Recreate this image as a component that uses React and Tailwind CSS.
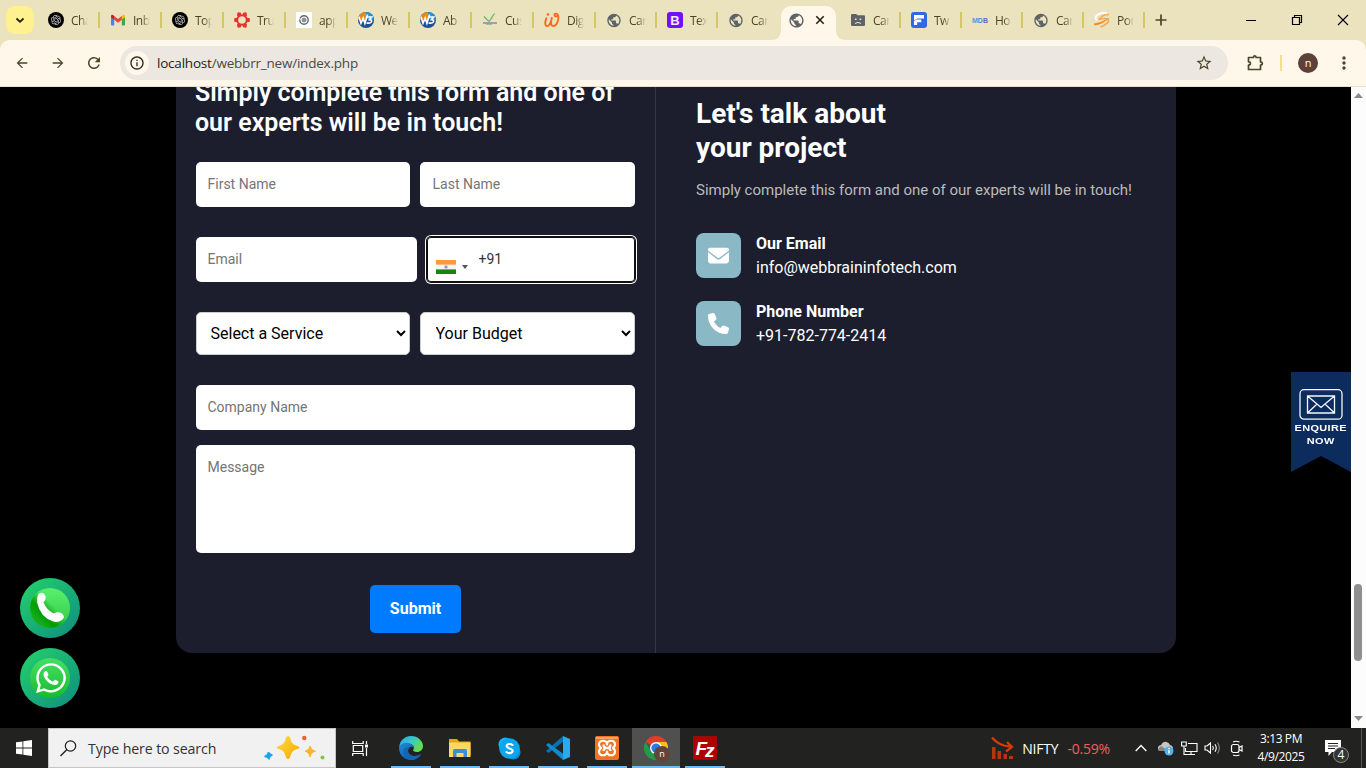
import React from "react";
import { MdPublic, MdStarBorder, MdMoreVert, MdArrowBack, MdArrowForward, MdRefresh, MdInfoOutline } from "react-icons/md";
import { FaEnvelope, FaPhone, FaWhatsapp } from "react-icons/fa6";
import { RiOpenaiFill } from "react-icons/ri";

function OpenAi() {
  return (
    <div className="flex size-4 items-center justify-center rounded-full bg-black text-[#d0d0d0]">
      <RiOpenaiFill size={12} />
    </div>
  );
}

function Gmail() {
  return (
    <svg width="16" height="16" viewBox="0 0 16 16">
      <path d="M1 4v8.6q0 .9 1 .9h2.2V7z" fill="#4285f4" />
      <path d="M15 4v8.6q0 .9-1 .9h-2.2V7z" fill="#34a853" />
      <path d="M11.8 4.2 13 3q2-1 2 1.2v1l-3.2 2.5z" fill="#fbbc04" />
      <path d="M4.2 4 8 7l3.8-3v3.7L8 10.7 4.2 7.7z" fill="#ea4335" />
      <path d="M1 5.2V4.1Q1.2 2.2 3 3l1.2 1v3.7z" fill="#c5221f" />
    </svg>
  );
}

function RedRing() {
  return (
    <svg width="16" height="16" viewBox="0 0 16 16">
      <g fill="#e5322f">
        <circle cx="8" cy="8" r="4.8" fill="none" stroke="#e5322f" strokeWidth="2" />
        <rect x="3.2" y="0.5" width="3.800" height="3.800" rx=".9" transform="rotate(12 5 2.400)" />
        <rect x="9" y="0.5" width="3.800" height="3.800" rx=".9" transform="rotate(-12 11 2.400)" />
        <rect x="12" y="6.100" width="3.800" height="3.800" rx=".9" />
        <rect x="9" y="11.7" width="3.800" height="3.800" rx=".9" transform="rotate(12 11 13.500)" />
        <rect x="3.2" y="11.7" width="3.800" height="3.800" rx=".9" transform="rotate(-12 5 13.500)" />
        <rect x="0.2" y="6.100" width="3.800" height="3.800" rx=".9" />
      </g>
    </svg>
  );
}

function GreyRing() {
  return (
    <svg width="16" height="16" viewBox="0 0 16 16">
      <path d="M0 0h16v16H0z" fill="#fff" />
      <circle cx="8" cy="8" r="4.200" fill="none" stroke="#5f666b" strokeWidth="1.400" />
      <circle cx="8" cy="8" r="2" fill="#8d9396" stroke="#7a8084" strokeWidth=".8" />
      <path d="M3 6.500 5 7.500" stroke="#fff" strokeWidth="1" />
    </svg>
  );
}

function WebBrain() {
  return (
    <svg width="16" height="16" viewBox="0 0 16 16">
      <circle cx="8" cy="8" r="8" fill="#1c4f95" />
      <path d="M0 8a8 8 0 0 1 8-8v7z" fill="#e58a17" />
      <path d="M8 0a8 8 0 0 1 8 8L8 7z" fill="#2593c8" />
      <path d="m1 4.8 2 6.4 2.2-5 1.7 5L9.6 2.6M9.4 5h4.2l-2.2 2.7q3 .2 2 2.2-1.2 1.8-4.8 1" fill="none" stroke="#fff" strokeWidth="1.7" />
    </svg>
  );
}

function GreenLeaf() {
  return (
    <svg width="16" height="16" viewBox="0 0 16 16">
      <path d="m2 4.500 5 5 5.500-8" fill="none" stroke="#56b773" strokeWidth="1.200" />
      <path d="m4.500 6.500 2.700 3L11 5" fill="none" stroke="#8bc79a" strokeWidth=".8" />
      <path d="M1 11h14" stroke="#8a75a8" strokeWidth="1.3" />
      <path d="M4 12.200h6" stroke="#58a879" strokeWidth=".8" />
    </svg>
  );
}

function OrangeW() {
  return (
    <svg width="17" height="16" viewBox="0 0 17 16">
      <path d="M2.500 6C.8 10 .8 14.500 3.300 14.500 6 14.500 7.500 9.500 8.500 5 7.300 9.500 6.800 14.500 9.800 14.500c3.700 0 6-6.500 5.500-10.500-.6-3.500-4-3.500-4.200-1.300 0 1.500 1.400 1.800 2.400 1.300" fill="none" stroke="#fb6a1d" strokeWidth="2" strokeLinecap="round" />
      <circle cx="4.300" cy="2.200" r="1.400" fill="#fb6a1d" />
    </svg>
  );
}

const Globe = () => <MdPublic size={17} className="text-[#5f6368]" />;

function Bootstrap() {
  return <div className="flex size-4 items-center justify-center rounded-[3px] bg-[#7311f5] font-['Liberation_Sans',sans-serif] text-[13px] leading-none font-bold text-[#f3eaff]">B</div>;
}

function SadFolder() {
  return (
    <svg width="16" height="16" viewBox="0 0 16 16">
      <path d="M1 3q0-1 1-1h4l1.700 1.300H14q1 0 1 1V13q0 1-1 1H2q-1 0-1-1z" fill="#5f6368" />
      <path d="M5 6.500h1.600v1.500H5zM9.600 6.500h1.600v1.500H9.600z" fill="#ece5c6" />
      <path d="M5.500 12v-.8q2.500-1.500 5 0v.8" fill="none" stroke="#ece5c6" />
    </svg>
  );
}

function BlueF() {
  return (
    <svg width="16" height="16" viewBox="0 0 16 16">
      <rect width="16" height="16" rx="3" fill="#3267e8" />
      <path d="M3 3h10v3.400H6.300L3 8.500zM3 9.300 5.500 7.500h4.800v2.800H6.200V13H3z" fill="#fff" />
    </svg>
  );
}

function Mdb() {
  return (
    <div className="flex w-4 justify-center font-['Liberation_Sans',sans-serif] text-[7px] leading-none font-bold">
      <span className="text-[#35a9df]">M</span><span className="text-[#3d8fd9]">D</span><span className="text-[#7a5cc4]">B</span>
    </div>
  );
}

function OrangeS() {
  return (
    <svg width="16" height="16" viewBox="0 0 16 16">
      <path d="M13 1C7 0 1.500 2.500 1.500 6.300q0 2.200 4 1.700" fill="none" stroke="#fff" strokeWidth="1.800" />
      <path d="M15 2.500Q8 2.500 5 7.500q8.500-2 9.500.5c.8 2-3 5.500-8 7" fill="none" stroke="#f6a957" strokeWidth="1.600" />
      <path d="M0 11.500Q8 10.500 16 5q-6 7-15.500 8.500z" fill="#f38a1c" />
    </svg>
  );
}

const tabs = [
  { icon: OpenAi, text: "Cha", wide: true },
  { icon: Gmail, text: "Inb", wide: true },
  { icon: OpenAi, text: "Top", wide: true },
  { icon: RedRing, text: "Tru", wide: true },
  { icon: GreyRing, text: "app", wide: true },
  { icon: WebBrain, text: "We", wide: true },
  { icon: WebBrain, text: "Ab", wide: true },
  { icon: GreenLeaf, text: "Cus", wide: true },
  { icon: OrangeW, text: "Dig", wide: true },
  { icon: Globe, text: "Car" },
  { icon: Bootstrap, text: "Tex" },
  { icon: Globe, text: "Car", noSep: true },
  { active: true },
  { icon: SadFolder, text: "Car" },
  { icon: BlueF, text: "Tw" },
  { icon: Mdb, text: "Ho" },
  { icon: Globe, text: "Car" },
  { icon: OrangeS, text: "Por" },
];

function Tab({ icon: Icon, text, wide, noSep, active }) {
  if (active) {
    return (
      <div className="relative flex h-[34px] w-[61px] shrink-0 self-end px-[2px]">
        <div className="flex w-[55px] items-center rounded-t-[10px] bg-[#fff8ea] pb-[6px] pl-[7px]">
          <Globe />
          <svg className="ml-[10px]" width="10" height="10" viewBox="0 0 10 10"><path d="m1.300 1.300 7.400 7.400m0-7.400L1.300 8.700" stroke="#25230f" strokeWidth="1.600" /></svg>
        </div>
        <svg className="absolute bottom-0 -left-[8px]" width="10" height="10"><path d="M10 0v10H0Q10 10 10 0" fill="#fff8ea" /></svg>
        <svg className="absolute bottom-0 left-[57px]" width="10" height="10"><path d="M0 0v10h10Q0 10 0 0" fill="#fff8ea" /></svg>
      </div>
    );
  }
  return (
    <div className={wide ? "flex h-full w-[62px] shrink-0 items-center pl-[10px]" : "flex h-full w-[61px] shrink-0 items-center pl-[10px]"}>
      <div className="flex w-4 shrink-0 justify-center"><Icon /></div>
      <div className="mt-px ml-[7px] w-[17px] overflow-hidden text-[12px] leading-4 tracking-[-0.500px] whitespace-nowrap text-[#4a4629] [mask-image:linear-gradient(to_right,black_50%,transparent)]">{text}</div>
      {!noSep && <div className="ml-auto h-4 w-[2px] bg-[#d6c765]" />}
    </div>
  );
}

function Browser() {
  return (
    <header className="shrink-0 bg-[#ebe2be] font-['Open_Sans','Noto_Sans',sans-serif]">
      <div className="flex h-10 items-center">
        <div className="ml-[6px] flex size-7 shrink-0 items-center justify-center rounded-[9px] bg-[#fff18f]">
          <svg width="10" height="7" viewBox="0 0 10 7"><path d="m1.500 1.500 3.500 3.300 3.500-3.300" fill="none" stroke="#1e1c10" strokeWidth="1.800" /></svg>
        </div>
        <div className="w-1 shrink-0" />
        {tabs.map((t, i) => <Tab key={i} {...t} />)}
        <svg className="ml-[10px]" width="12" height="12" viewBox="0 0 12 12"><path d="M6 .5v11M.5 6h11" stroke="#4a4629" strokeWidth="1.700" /></svg>
        <div className="ml-auto flex items-center pr-[17px]">
          <svg width="12" height="12"><path d="M1 6.500h10" stroke="#000" /></svg>
          <svg className="ml-[34px]" width="12" height="12" viewBox="0 0 12 12"><path d="M1.500 3.500h7v7h-7zM3.500 3V1.500h7v7H9" fill="none" stroke="#000" strokeWidth="1.200" /></svg>
          <svg className="ml-[34px]" width="12" height="12"><path d="m1 1 10 10M11 1 1 11" stroke="#000" strokeWidth="1.100" /></svg>
        </div>
      </div>
      <div className="flex h-[47px] items-center rounded-t-[10px] border-b border-[#e6deca] bg-[#fff8ea] text-[#4a4629]">
        <MdArrowBack className="ml-[14px]" size={16} />
        <MdArrowForward className="ml-5" size={16} />
        <MdRefresh className="ml-[19px]" size={18} />
        <div className="ml-[17px] flex h-[34px] w-[1108px] items-center rounded-full bg-[#ece7e0] pr-[15px]">
          <div className="ml-[5px] flex size-6 items-center justify-center rounded-full bg-[#fff8ea] text-[#2a291f]"><MdInfoOutline size={16} /></div>
          <div className="mt-px ml-2 text-[13.500px] tracking-[-0.210px] text-[#4c4a44]"><span className="text-[#1f1e1a]">localhost</span>/webbrr_new/index.php</div>
          <MdStarBorder className="ml-auto" size={18} />
        </div>
        <svg className="ml-[19px]" width="18" height="18" viewBox="0 0 18 18"><path d="M1.500 3.500h5q0-1.700 1.300-1.700T9.100 3.500h4.400V8q1.800 0 1.800 1.500T13.500 11v4.500h-12V11q1.900 0 1.900-1.600T1.500 7.800z" fill="none" stroke="#4a4629" strokeWidth="1.700" strokeLinejoin="round" /></svg>
        <div className="ml-[15px] h-4 w-[2px] bg-[#f3e37c]" />
        <div className="ml-4 flex size-5 items-center justify-center rounded-full bg-[#5d4037] pb-px text-[11px] leading-none text-white">n</div>
        <MdMoreVert className="ml-[16px]" size={20} />
      </div>
    </header>
  );
}

const field = "h-[45px] rounded-[5px] bg-white pb-[2px] text-[14px] text-[#333] placeholder:text-[#757575]";
const select = "h-[43px] rounded-[5px] border border-[#ccc] bg-white text-[16px] text-black";

function ContactForm() {
  return (
    <form className="flex w-[480px] flex-col border-r border-[#34374a] px-5">
      <h2 className="-mt-[9px] -ml-px text-[24.960px] leading-[30px] font-semibold whitespace-nowrap text-white">Simply complete this form and one of<br />our experts will be in touch!</h2>
      <div className="mt-6 flex gap-[10px]">
        <input className={field + " w-[214px] px-[11.500px]"} placeholder="First Name" />
        <input className={field + " w-[215px] px-[12.500px]"} placeholder="Last Name" />
      </div>
      <div className="mt-[30px] flex gap-[10px]">
        <input className={field + " w-[221px] px-[11.500px]"} placeholder="Email" />
        <div className="flex h-[45px] w-[208px] items-center rounded-[4px] bg-white pl-[9px] shadow-[0_0_0_1px_#101010,0_0_0_2px_#fff] ring-1 ring-[#101010] ring-inset">
          <svg className="mt-[15px]" width="20" height="14" viewBox="0 0 20 14">
            <path d="M0 0h20v14H0z" fill="#f4f4f4" />
            <path d="M0 0h20v4.600H0z" fill="#ff9933" />
            <path d="M0 9.400h20V14H0z" fill="#138808" />
            <circle cx="10" cy="7" r="1.700" fill="#9898d5" />
          </svg>
          <svg className="mt-[15px] ml-[6px]" width="6" height="4"><path d="M0 0h6L3 4z" fill="#555" /></svg>
          <input className="ml-[10.500px] w-[120px] text-[14px] text-[#333]" defaultValue="+91" />
        </div>
      </div>
      <div className="mt-[30px] flex gap-[10px]">
        <select className={select + " w-[214px] px-[9.500px]"}><option>Select a Service</option></select>
        <select className={select + " w-[215px] pr-[9.500px] pl-[10.500px]"}><option>Your Budget</option></select>
      </div>
      <input className={field + " mt-[30px] px-[11.500px]"} placeholder="Company Name" />
      <textarea className="mt-[15px] h-[108px] resize-none rounded-[5px] bg-white px-[11.500px] py-3 text-[14px] leading-5 placeholder:text-[#757575]" placeholder="Message" />
      <button type="button" className="mt-8 h-12 w-[91px] self-center rounded-[5px] bg-[#007bff] text-[16px] font-bold text-white">Submit</button>
    </form>
  );
}

function ContactRow({ icon, title, value }) {
  return (
    <div className="flex gap-[15px]">
      <div className="flex h-[45px] w-[45px] items-center justify-center rounded-[8px] bg-[#8bb8c5] text-white">{icon}</div>
      <div className="-mt-px text-[16px] leading-6 text-white"><div className="font-bold">{title}</div><div>{value}</div></div>
    </div>
  );
}

function EnquireBadge() {
  return (
    <div className="absolute top-[285px] right-0 flex h-[100px] w-[60px] flex-col items-center bg-[#0d2c5e] pt-[17px] text-center font-['Liberation_Sans',sans-serif] text-[9.500px] leading-[13px] font-bold text-white [clip-path:polygon(0_0,100%_0,100%_100%,50%_84%,0_100%)]">
      <svg width="44" height="31" viewBox="0 0 44 31" fill="none" stroke="#f4f7fb">
        <rect x="1" y=".700" width="42" height="29.500" rx="4" strokeWidth="1.300" />
        <path d="M8.500 7h27v17h-27zM8.500 7l9.500 8 4 3.500 4-3.500 9.500-8M8.500 24l9.500-9M35.500 24 26 15" strokeWidth="1.300" />
      </svg>
      <div className="mt-px scale-x-115 tracking-[0.300px]">ENQUIRE<br />NOW</div>
    </div>
  );
}

function Page() {
  return (
    <main className="flex h-[641px] shrink-0 overflow-hidden bg-black font-[Roboto,sans-serif]">
      <div className="relative w-[1351px] pl-44">
        <section className="flex h-[566px] w-[1000px] rounded-b-[16px] bg-[#1c1e2e]">
          <ContactForm />
          <div className="pt-[10px] pl-10">
            <h2 className="text-[28px] leading-[33.600px] font-bold text-white">Let's talk about<br />your project</h2>
            <p className="mt-[14px] text-[15px] leading-6 text-[#bbb]">Simply complete this form and one of our experts will be in touch!</p>
            <div className="mt-[31px] flex flex-col gap-[21px]">
              <ContactRow icon={<FaEnvelope size={21} />} title="Our Email" value="info@webbraininfotech.com" />
              <ContactRow icon={<FaPhone size={21} />} title="Phone Number" value="+91-782-774-2414" />
            </div>
          </div>
        </section>
        <div className="absolute top-[491px] left-5 flex flex-col gap-[10px]">
          <div className="flex size-[60px] items-center justify-center rounded-full bg-linear-to-br from-[#25d366] to-[#128c7e]">
            <svg width="40" height="40" viewBox="0 0 40 40">
              <defs>
                <linearGradient id="call" x1="0" y1="0" x2="0" y2="1"><stop offset="0" stopColor="#5af06d" /><stop offset="1" stopColor="#2fc845" /></linearGradient>
                <linearGradient id="callShade" x1=".62" y1=".4" x2=".2" y2=".8"><stop offset=".1" stopColor="#009900" stopOpacity="0" /><stop offset=".65" stopColor="#009d00" /><stop offset="1" stopColor="#14ab1a" /></linearGradient>
              </defs>
              <circle cx="20" cy="20" r="20" fill="url(#call)" />
              <circle cx="20" cy="20" r="20" fill="url(#callShade)" />
              <path d="M8 7q2-3.500 5.500-1.500 3.200 2.500 1.700 6.500l-1.700 2.300q2.500 7 10 11.200l3-1.200q4-.7 6.500 2.200 2 3-.8 5.200-4 3.300-9 1.800Q10 29 7.200 14.500 6.500 10 8 7" fill="#fff" />
            </svg>
          </div>
          <div className="flex size-[60px] items-center justify-center rounded-full bg-linear-to-br from-[#25d366] to-[#128c7e]">
            <div className="flex size-10 items-center justify-center rounded-full bg-linear-to-b from-[#45df64] to-[#12bd28] pl-[2px] text-white"><FaWhatsapp size={34} /></div>
          </div>
        </div>
        <EnquireBadge />
      </div>
      <div className="flex w-[15px] flex-col items-center bg-[#fcfcfc] pr-px">
        <svg className="mt-[6px]" width="9" height="5"><path d="M0 5h9L4.500 0z" fill="#8b8b8b" /></svg>
        <div className="mt-[486px] h-[77px] w-2 rounded-full bg-[#8f8f8f]" />
        <svg className="mt-[55px]" width="9" height="5"><path d="M0 0h9L4.500 5z" fill="#8b8b8b" /></svg>
      </div>
    </main>
  );
}

function Edge() {
  return (
    <svg width="24" height="24" viewBox="0 0 24 24">
      <defs>
        <linearGradient id="edgeTop" x1="0" y1="0" x2="1" y2=".5"><stop stopColor="#2aa6e0" /><stop offset=".5" stopColor="#35c6d2" /><stop offset="1" stopColor="#66dd4c" /></linearGradient>
        <linearGradient id="edgeLow" x1="0" y1="0" x2="1" y2="1"><stop stopColor="#1f8bdb" /><stop offset="1" stopColor="#124a97" /></linearGradient>
      </defs>
      <path d="M.2 11C1 4 6 0 12 0c7 0 12 5 12 10 0 3.500-2.500 6-6 6-3 0-4.500-1-3.700-2.200C16 11 14 7.800 9.500 7.500 5 7.300 1.500 9 .2 11" fill="url(#edgeTop)" />
      <path d="M.1 11C2 7.500 6 6.200 10 7.200c3 .7 4.700 3 4.500 5-.2-1.500-2.200-2-3.700-1C7 14 9 20 16 20q3 0 6-2c-2 4-6 6-10 6C4 24-.4 17.500.1 11" fill="url(#edgeLow)" />
      <path d="M4.500 15c0 5 3.500 9 7.500 9 4 0 8-2 10-6q-3 2-6 2C10 20 7 15 10.500 11.400 7 11 4.500 12.500 4.500 15" fill="#1466b5" />
    </svg>
  );
}

function Explorer() {
  return (
    <svg width="22" height="18" viewBox="0 0 22 18">
      <path d="M0 0h8l2 2.500h11.500V16H0z" fill="#e7a516" />
      <path d="M0 3.500h21.500V18H0z" fill="#ffd766" />
      <path d="M4 18v-6.500q0-1.500 1.500-1.500h11q1.500 0 1.500 1.500V18h-3.500v-4h-7v4z" fill="#3c8ed1" />
    </svg>
  );
}

function Skype() {
  return (
    <svg width="23" height="23" viewBox="0 0 23 23">
      <circle cx="7.500" cy="7.500" r="7" fill="#19b4f1" />
      <circle cx="15.500" cy="15.500" r="7" fill="#078de0" />
      <circle cx="11.500" cy="11.500" r="10.300" fill="#0da5eb" />
      <path d="M14.500 8C12.500 6.300 8.600 6.800 8.700 9.200c.2 2.700 5.900 1.700 5.900 4.600 0 2.700-4.100 3-6.200 1.200" fill="none" stroke="#fff" strokeWidth="2.100" strokeLinecap="round" />
    </svg>
  );
}

function VsCode() {
  return (
    <svg width="24" height="24" viewBox="0 0 24 24">
      <path d="M17.500 5.500 2.500 17 0 15l17-15z" fill="#0872b5" />
      <path d="M17.500 18 2.500 7 0 9l17 15z" fill="#118acb" />
      <path d="M17 0 24 3v18l-7 3z" fill="#29a9ee" />
    </svg>
  );
}

function Xampp() {
  return (
    <svg width="24" height="24" viewBox="0 0 24 24">
      <rect width="24" height="24" rx="2" fill="#ee7423" />
      <path d="M1 1h22v2H1z" fill="#f6a468" />
      <path d="M12 8.500C12 3.500 4 3.500 4 8.500c0 2 2 3.500 2 3.500s-2 1.500-2 3.500c0 5 8 5 8 0 0 5 8 5 8 0 0-2-2-3.500-2-3.500s2-1.500 2-3.500c0-5-8-5-8 0zM8.500 8.500q0 3.500 3.500 3.500t3.500 3M15.500 8.500q0 3.500-3.500 3.500t-3.500 3" fill="none" stroke="#fff" strokeWidth="2.200" strokeLinejoin="round" />
    </svg>
  );
}

function Chrome() {
  return (
    <div className="relative size-6">
      <svg width="24" height="24" viewBox="0 0 24 24">
        <path d="M12 12 1.600 6A12 12 0 0 1 22.400 6z" fill="#e33b2e" />
        <path d="M12 12V6h10.400A12 12 0 0 1 12 24l5.200-9z" fill="#fbc116" />
        <path d="M12 12 17.200 15 12 24A12 12 0 0 1 1.600 6l5.200 9z" fill="#229b48" />
        <circle cx="12" cy="12" r="6" fill="#fff" />
        <circle cx="12" cy="12" r="4.600" fill="#297be6" />
      </svg>
      <div className="absolute top-[10px] left-[10px] flex size-4 items-center justify-center rounded-full bg-[#62443c] pb-px text-[9px] leading-none text-white">n</div>
    </div>
  );
}

function FileZilla() {
  return <div className="flex size-6 items-center justify-center border border-dotted border-[#8a1010] bg-[#b20000] font-['Liberation_Sans',sans-serif] text-[19px] leading-none font-bold tracking-[-2px] text-white italic"><span>F</span><span className="pt-1 pr-[2px]">z</span></div>;
}

function TaskApp({ children, active }) {
  return (
    <div className={active ? "flex h-10 w-12 flex-col items-center bg-[#505050]" : "flex h-10 w-10 flex-col items-center"}>
      <div className="flex h-[38px] items-center pt-[2px]">{children}</div>
      <div className="h-[2px] w-full bg-[#76b9ed]" />
    </div>
  );
}

function Taskbar() {
  return (
    <footer className="flex h-10 shrink-0 items-center bg-[#222321] font-['Open_Sans','Noto_Sans',sans-serif] text-white">
      <svg className="ml-4" width="16" height="16" viewBox="0 0 16 16"><path d="m0 2.300 6.500-.9v6.200H0zM7.300 1.300 16 0v7.600H7.300zM0 8.400h6.500v6.200L0 13.700zM7.300 8.400H16V16l-8.700-1.200z" fill="#fff" /></svg>
      <div className="ml-4 flex h-10 w-72 items-center border border-[#c5c5c5] bg-[#f1f1f1]">
        <svg className="ml-[11px]" width="17" height="17" viewBox="0 0 17 17"><circle cx="10.500" cy="6" r="5.200" fill="none" stroke="#1c1c1c" strokeWidth="1.200" /><path d="M6.700 9.700.5 16" stroke="#1c1c1c" strokeWidth="1.300" /></svg>
        <div className="mt-px ml-[11px] text-[14.200px] tracking-[-0.120px] text-[#333]">Type here to search</div>
        <svg className="mr-[8px] ml-auto" width="64" height="28" viewBox="0 0 64 28">
          <defs><linearGradient id="star" x1="0" y1="0" x2="1" y2="1"><stop stopColor="#ffdc45" /><stop offset="1" stopColor="#f5a800" /></linearGradient></defs>
          <path d="M25 2q1.800 0 2.600 3.500Q29 10.500 33 11.500q3.500.9 3.500 2T33 15.500q-4 1-5.400 6Q26.800 25 25 25t-2.600-3.500q-1.400-5-5.400-6-3.500-.9-3.500-2t3.500-2q4-1 5.400-6Q23.200 2 25 2" fill="url(#star)" />
          <path d="M47 12q1 4.500 5.500 5.300Q48 18 47 23q-1-5-5-5.700Q46 16.500 47 12" fill="#fbb42a" stroke="#fbb42a" />
          <path d="M5.500 18q.5 2.300 3.500 3-2.500 1-3 4-1-2-4-2.500Q5 21.500 5.500 18" fill="#20a3ea" stroke="#20a3ea" strokeWidth="1.500" strokeLinejoin="round" />
          <circle cx="41.300" cy="4" r="2.200" fill="#f05b32" /><circle cx="59.500" cy="23.500" r="2" fill="#84c53d" />
        </svg>
      </div>
      <svg className="ml-4" width="17" height="17" viewBox="0 0 17 17" fill="none" stroke="#fff" strokeWidth="1.200"><path d="M.7 1v2.500h10.500V1M.7 16v-2.500h10.500V16M1.300 5.500h9.400v6H1.300zM14.500 1v3M14.500 8v8" /><path d="M13 4.500h3v3h-3z" fill="#fff" stroke="none" /></svg>
      <div className="ml-[22px] flex items-center gap-[9px]">
        <TaskApp><Edge /></TaskApp><TaskApp><Explorer /></TaskApp><TaskApp><Skype /></TaskApp><TaskApp><VsCode /></TaskApp>
        <TaskApp><Xampp /></TaskApp>
        <div className="-mx-1"><TaskApp active><Chrome /></TaskApp></div>
        <TaskApp><FileZilla /></TaskApp>
      </div>
      <svg className="ml-auto" width="23" height="24" viewBox="0 0 23 24"><path d="M1 1.500q5 6 12 8 4 .8 8 1.500M16 6l5 5-6 4.500" fill="none" stroke="#d63c0b" strokeWidth="2.200" /><path d="M1 11h3.500v12H1zM6.500 15H10v8H6.500zM12.500 18H16v5h-3.500zM18 20h4v3h-4z" fill="#b8340e" /></svg>
      <div className="ml-2 text-[14px] tracking-[-0.200px]">NIFTY</div>
      <div className="ml-[9px] text-[14px] tracking-[-0.200px] text-[#f05f5f]">-0.59%</div>
      <svg className="ml-[25px]" width="12" height="8" viewBox="0 0 12 8"><path d="m.7 7 5.300-5.500L11.300 7" fill="none" stroke="#fff" strokeWidth="1.300" /></svg>
      <svg className="ml-[10px]" width="17" height="16" viewBox="0 0 17 16"><path d="M1 9q-.5-3.300 3-4Q6 1 9.500 2 12 2.500 13 5q3 .5 3 4v2H2z" fill="#c6c6c6" /><path d="m4 6 8 5H2q-2-2 2-5" fill="#868686" /><circle cx="12" cy="11" r="4.500" fill="#48b4ed" /><path d="M12 8v1.300M12 10.300v3.300" stroke="#fff" strokeWidth="1.500" /></svg>
      <svg className="ml-[7px]" width="17" height="15" viewBox="0 0 17 15" fill="none" stroke="#fff" strokeWidth="1.100"><path d="M7 2.500h9v8H4.500V7M10 10.500v3M6 13.500h8M.6 1h4.700v4H.6zM3 5v8.500h3" /></svg>
      <svg className="ml-[6px]" width="18" height="14" viewBox="0 0 18 14" fill="none" stroke="#fff" strokeWidth="1.100"><path d="M1 5h2l3.500-3v10L3 9H1zM8.700 5q1.400 2 0 4M11 3.300q2.500 3.700 0 7.400" /><path d="M13.500 1.500q3.700 5.500 0 11" stroke="#888" /></svg>
      <svg className="ml-[8px]" width="14" height="17" viewBox="0 0 14 17" fill="none" stroke="#fff" strokeWidth="1.200"><rect x="1.500" y="4.500" width="7.500" height="8" rx="2" /><path d="m9 7.500 3-1.500v5L9 9.500M3 2q3-1.500 6.500 0M3 15q3 1.500 6.500 0" /></svg>
      <div className="ml-[11px] w-[52px] text-center text-[12px] leading-[18px] tracking-[-0.400px] whitespace-nowrap"><div>3:13 PM</div><div>4/9/2025</div></div>
      <div className="relative mr-[12px] ml-[18px] h-7 w-6">
        <svg className="mt-[6px]" width="16" height="16" viewBox="0 0 16 16"><path d="M0 0h16v12H7l-3.500 4v-4H0z" fill="#fff" /><path d="M3 3.500h10M3 6h10M3 8.500h7" stroke="#222321" /></svg>
        <div className="absolute top-[13px] left-2 flex size-4 items-center justify-center rounded-full border border-[#8a8a8a] bg-[#343434] text-[12px] leading-none">4</div>
      </div>
      <div className="mr-1 h-10 w-px bg-[#555]" />
    </footer>
  );
}

export default function App() {
  return (
    <div className="flex h-[768px] w-[1366px] flex-col overflow-hidden">
      <Browser />
      <Page />
      <Taskbar />
    </div>
  );
}
